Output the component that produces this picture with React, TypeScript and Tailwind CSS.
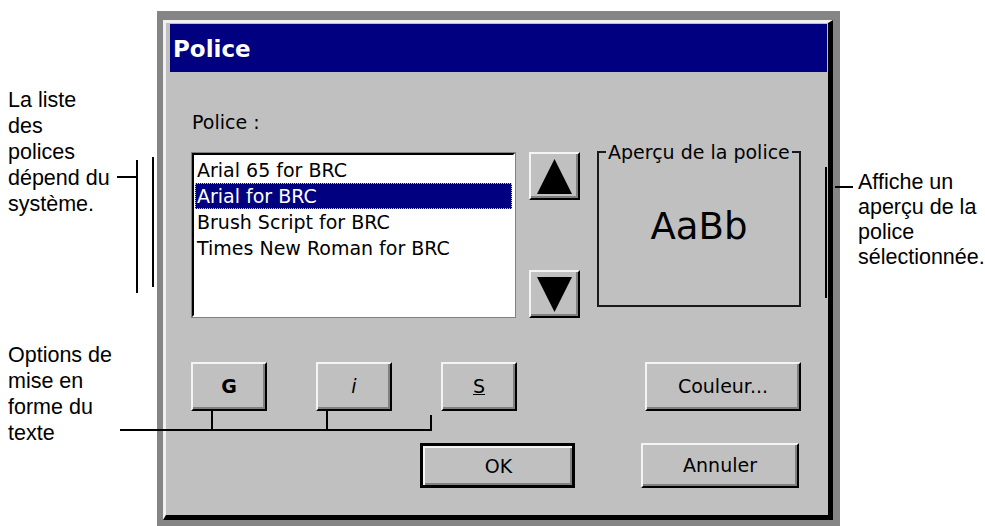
import React from 'react';

const fonts = [
  'Arial 65 for BRC',
  'Arial for BRC',
  'Brush Script for BRC',
  'Times New Roman for BRC',
];

const bevel =
  'flex items-center justify-center bg-[#c0c0c0] border-2 border-t-[#f4f4f4] border-l-[#f4f4f4] border-r-black border-b-black shadow-[inset_-2px_-2px_0_#808080]';

const Leaders: React.FC = () => (
  <svg className="absolute inset-0 pointer-events-none" width={985} height={526}>
    <g stroke="#000" strokeWidth={2} fill="none">
      <line x1={117} y1={177} x2={137} y2={177} />
      <line x1={137} y1={160} x2={137} y2={293} />
      <line x1={153} y1={157} x2={153} y2={287} />
      <line x1={120} y1={430} x2={432} y2={430} />
      <line x1={212} y1={411} x2={212} y2={430} />
      <line x1={327} y1={411} x2={327} y2={430} />
      <line x1={431} y1={415} x2={431} y2={430} />
      <line x1={826} y1={167} x2={826} y2={298} />
      <line x1={835} y1={187} x2={853} y2={187} />
    </g>
  </svg>
);

export default function App() {
  const [selected, setSelected] = React.useState(1);

  return (
    <div className="relative w-[985px] h-[526px] bg-white overflow-hidden flex text-black font-['Liberation_Sans',Arial,sans-serif]">
      {/* left notes */}
      <div className="w-[157px] shrink-0 flex flex-col pl-[8px] pt-[87px] text-[21.5px] leading-[26px]">
        <p>La liste<br />des<br />polices<br />dépend du<br />système.</p>
        <p className="mt-[125px]">Options de<br />mise en<br />forme du<br />texte</p>
      </div>

      {/* dialog */}
      <div className="w-[683px] shrink-0 mt-[11px] h-[515px] bg-[#858585] pt-[9px] pl-[6px] pr-[7px] pb-[6px]">
        <div className="h-full flex flex-col bg-[#c0c0c0] border-t-[3px] border-l-[3px] border-t-[#f0f0f0] border-l-[#f0f0f0] border-r-[5px] border-b-[5px] border-r-black border-b-black font-['DejaVu_Sans',sans-serif] text-[19px]">
          <div className="ml-[4px] mr-[1px] mt-[1px] h-[48px] bg-[#000080] pl-[3px] pt-[2px] flex items-center text-white font-bold text-[23px]">
            Police
          </div>

          <div className="flex flex-col pl-[26px] pr-[27px]">
            <div className="mt-[39px] leading-[22px]">Police :</div>

            <div className="mt-[19px] flex items-start">
              <div className="mt-[1px] w-[323px] h-[164px] bg-white border-2 border-t-black border-l-black border-r-white border-b-white shadow-[0_0_0_1px_#808080] pt-[2px] px-[1px]">
                {fonts.map((f, i) => (
                  <div
                    key={f}
                    onClick={() => setSelected(i)}
                    className={
                      'h-[26px] leading-[26px] pl-[2px] whitespace-nowrap ' +
                      (i === selected
                        ? 'bg-[#000080] text-white outline-1 outline-dotted outline-[#e6e600] -outline-offset-1'
                        : '')
                    }
                  >
                    {f}
                  </div>
                ))}
              </div>

              <div className="ml-[14px] w-[51px] h-[166px] flex flex-col justify-between">
                <button className={bevel + ' h-[48px]'}>
                  <svg width={35} height={35} viewBox="0 0 35 35">
                    <polygon points="17.5,0 35,35 0,35" fill="#000" />
                  </svg>
                </button>
                <button className={bevel + ' h-[48px]'}>
                  <svg width={35} height={35} viewBox="0 0 35 35">
                    <polygon points="0,0 35,0 17.5,35" fill="#000" />
                  </svg>
                </button>
              </div>

              <fieldset className="ml-[17px] -mt-[10px] w-[204px] h-[165px] border-2 border-[#1a1a1a]">
                <legend className="ml-[7px] px-[2px] leading-[20px]">Aperçu de la police</legend>
                <div className="pt-[43px] text-center text-[37px] leading-[44px]">AaBb</div>
              </fieldset>
            </div>

            <div className="mt-[44px] flex items-center">
              <button className={bevel + ' -ml-[1px] w-[76px] h-[49px] font-bold'}>G</button>
              <button className={bevel + ' ml-[49px] w-[76px] h-[49px] italic'}>i</button>
              <button className={bevel + ' ml-[49px] w-[76px] h-[49px] underline'}>S</button>
              <button className={bevel + ' ml-auto w-[156px] h-[49px]'}>Couleur...</button>
            </div>

            <div className="mt-[32px] flex justify-end">
              <button className="w-[155px] h-[45px] border-[3px] border-black">
                <span className="flex h-full items-center justify-center bg-[#c0c0c0] border-t-2 border-l-2 border-t-[#f4f4f4] border-l-[#f4f4f4] shadow-[inset_-2px_-2px_0_#808080]">
                  OK
                </span>
              </button>
              <button className={bevel + ' ml-[66px] mr-[2px] w-[158px] h-[45px]'}>Annuler</button>
            </div>
          </div>
        </div>
      </div>

      {/* right note */}
      <div className="flex-1 pl-[18px] pt-[170px] text-[21.5px] leading-[25px]">
        <p>Affiche un<br />aperçu de la<br />police<br />sélectionnée.</p>
      </div>

      <Leaders />
    </div>
  );
}
